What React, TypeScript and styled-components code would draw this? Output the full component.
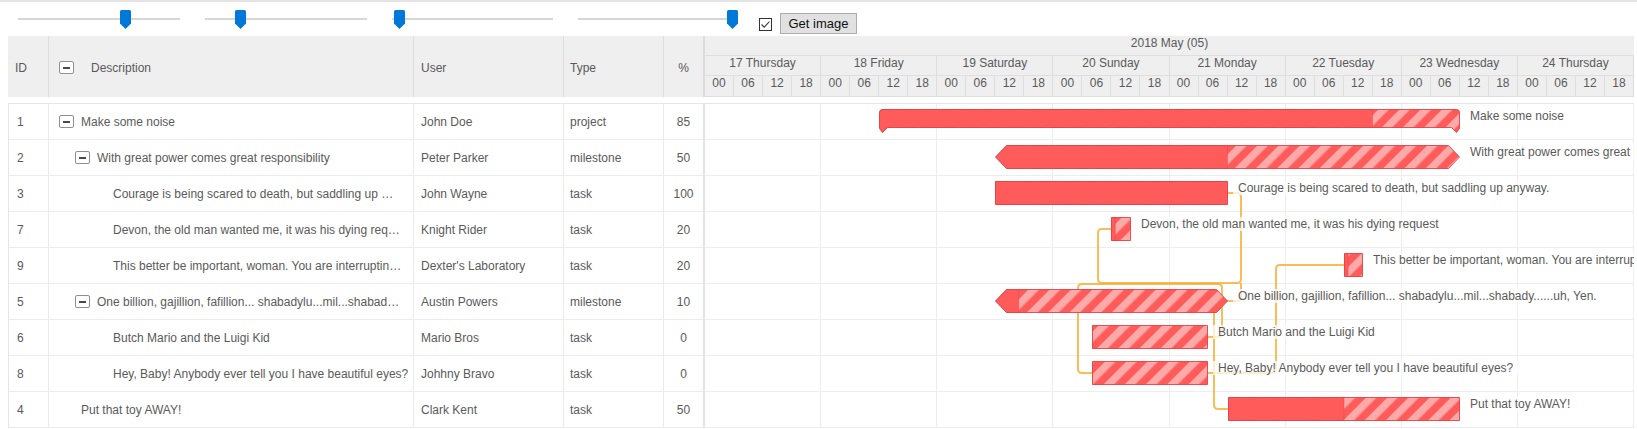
import React from "react";
import styled, { createGlobalStyle } from "styled-components";

const GlobalStyle = createGlobalStyle`
  html, body { margin: 0; padding: 0; background: #fff; }
  body { font-family: "Liberation Sans", Arial, sans-serif; font-size: 12px; color: #5a5a5a; }
  * { box-sizing: border-box; }
`;

const GANTT_W = 929;
const HOUR = GANTT_W / 192;
const X = (h: number) => h * HOUR;
const ROW = 36;

type Kind = "project" | "summary" | "task";
interface Task {
  id: number;
  desc: string;
  label: string;
  user: string;
  type: string;
  pct: number;
  level: number;
  toggle: boolean;
  kind: Kind;
  start: number;
  end: number;
}

const tasks: Task[] = [
  { id: 1, desc: "Make some noise", label: "Make some noise", user: "John Doe", type: "project", pct: 85, level: 0, toggle: true, kind: "project", start: 36, end: 156 },
  { id: 2, desc: "With great power comes great responsibility", label: "With great power comes great responsibility", user: "Peter Parker", type: "milestone", pct: 50, level: 1, toggle: true, kind: "summary", start: 60, end: 156 },
  { id: 3, desc: "Courage is being scared to death, but saddling up …", label: "Courage is being scared to death, but saddling up anyway.", user: "John Wayne", type: "task", pct: 100, level: 2, toggle: false, kind: "task", start: 60, end: 108 },
  { id: 7, desc: "Devon, the old man wanted me, it was his dying req…", label: "Devon, the old man wanted me, it was his dying request", user: "Knight Rider", type: "task", pct: 20, level: 2, toggle: false, kind: "task", start: 84, end: 88 },
  { id: 9, desc: "This better be important, woman. You are interruptin…", label: "This better be important, woman. You are interrupting my experiment.", user: "Dexter's Laboratory", type: "task", pct: 20, level: 2, toggle: false, kind: "task", start: 132, end: 136 },
  { id: 5, desc: "One billion, gajillion, fafillion... shabadylu...mil...shabad…", label: "One billion, gajillion, fafillion... shabadylu...mil...shabady......uh, Yen.", user: "Austin Powers", type: "milestone", pct: 10, level: 1, toggle: true, kind: "summary", start: 60, end: 108 },
  { id: 6, desc: "Butch Mario and the Luigi Kid", label: "Butch Mario and the Luigi Kid", user: "Mario Bros", type: "task", pct: 0, level: 2, toggle: false, kind: "task", start: 80, end: 104 },
  { id: 8, desc: "Hey, Baby! Anybody ever tell you I have beautiful eyes?", label: "Hey, Baby! Anybody ever tell you I have beautiful eyes?", user: "Johhny Bravo", type: "task", pct: 0, level: 2, toggle: false, kind: "task", start: 80, end: 104 },
  { id: 4, desc: "Put that toy AWAY!", label: "Put that toy AWAY!", user: "Clark Kent", type: "task", pct: 50, level: 0, toggle: false, kind: "task", start: 108, end: 156 },
];

const days = ["17 Thursday", "18 Friday", "19 Saturday", "20 Sunday", "21 Monday", "22 Tuesday", "23 Wednesday", "24 Thursday"];
const hours = ["00", "06", "12", "18"];

const links: [number, number][][] = [
  [[522, 89], [536, 89], [536, 179], [393, 179], [393, 125], [407, 125]],
  [[522, 197], [536, 197], [536, 179]],
  [[503, 233], [517, 233], [517, 180], [373, 180], [373, 269], [388, 269]],
  [[509, 197], [509, 305], [523, 305]],
  [[503, 269], [571, 269], [571, 161], [640, 161]],
];

function roundedPath(pts: [number, number][], r = 4) {
  let d = `M${pts[0][0]},${pts[0][1]}`;
  for (let i = 1; i < pts.length - 1; i++) {
    const [px, py] = pts[i - 1];
    const [cx, cy] = pts[i];
    const [nx, ny] = pts[i + 1];
    const d1 = Math.hypot(cx - px, cy - py);
    const d2 = Math.hypot(nx - cx, ny - cy);
    const rr = Math.min(r, d1 / 2, d2 / 2);
    const ax = cx + ((px - cx) / d1) * rr;
    const ay = cy + ((py - cy) / d1) * rr;
    const bx = cx + ((nx - cx) / d2) * rr;
    const by = cy + ((ny - cy) / d2) * rr;
    d += ` L${ax},${ay} Q${cx},${cy} ${bx},${by}`;
  }
  const last = pts[pts.length - 1];
  d += ` L${last[0]},${last[1]}`;
  return d;
}

function barShape(t: Task, top: number) {
  const x0 = Math.round(X(t.start)) + 0.5;
  const x1 = Math.round(X(t.end)) - 0.5;
  if (t.kind === "project") {
    const y0 = top + 5.5;
    const y1 = top + 23.5;
    return {
      x0, x1,
      d: `M${x0},${y0 + 3} Q${x0},${y0} ${x0 + 3},${y0} L${x1 - 3},${y0} Q${x1},${y0} ${x1},${y0 + 3} L${x1},${y1 + 1} L${x1 - 3},${y1 + 5} L${x1 - 8},${y1} L${x0 + 8},${y1} L${x0 + 3},${y1 + 5} L${x0},${y1 + 1} Z`,
    };
  }
  const y0 = top + 5.5;
  const y1 = top + 28.5;
  if (t.kind === "summary") {
    const mid = top + 17;
    return {
      x0, x1,
      d: `M${x0},${mid} L${x0 + 11},${y0} L${x1 - 11},${y0} L${x1},${mid} L${x1 - 11},${y1} L${x0 + 11},${y1} Z`,
    };
  }
  return { x0, x1, d: `M${x0},${y0} L${x1},${y0} L${x1},${y1} L${x0},${y1} Z` };
}

/* ---------- toolbar ---------- */

const Page = styled.div`
  width: 1637px;
  height: 429px;
  overflow: hidden;
  border-top: 2px solid #e4e4e4;
`;

const Toolbar = styled.div`
  display: flex;
  align-items: flex-start;
  height: 34px;
  padding-left: 18px;
`;

const SliderBox = styled.div<{ $width: number }>`
  position: relative;
  width: ${(p) => p.$width}px;
  height: 19px;
  margin-top: 8px;
  flex: none;
  & + & { margin-left: 25px; }
`;

const Track = styled.div`
  margin-top: 8px;
  height: 2px;
  background: #d6d6d6;
`;

const Thumb = styled.div`
  position: absolute;
  top: 0;
  width: 11px;
  height: 19px;
  display: flex;
`;

const CheckBox = styled.div`
  margin-left: 21px;
  margin-top: 16px;
  width: 13px;
  height: 13px;
  flex: none;
  border: 1px solid #333;
  background: #fff;
  display: flex;
  align-items: center;
  justify-content: center;
`;

const Button = styled.button`
  margin-left: 8px;
  margin-top: 11px;
  width: 77px;
  height: 21px;
  flex: none;
  padding: 0;
  background: #e1e1e1;
  border: 1px solid #adadad;
  font-family: "Liberation Sans", Arial, sans-serif;
  font-size: 13px;
  color: #111;
`;

const Slider = ({ width, value }: { width: number; value: number }) => (
  <SliderBox $width={width}>
    <Track />
    <Thumb style={{ left: value * (width - 11) }}>
      <svg width="11" height="19" viewBox="0 0 11 19">
        <path d="M1.5 0 H9.5 Q11 0 11 1.5 V13.5 L5.5 19 L0 13.5 V1.5 Q0 0 1.5 0 Z" fill="#0078d7" />
      </svg>
    </Thumb>
  </SliderBox>
);

/* ---------- chart ---------- */

const Chart = styled.div`
  padding-left: 8px;
`;

const HeaderRow = styled.div`
  display: flex;
  height: 61px;
`;

const BodyRowWrap = styled.div`
  display: flex;
  margin-top: 6px;
`;

const LeftHeader = styled.div`
  display: flex;
  width: 695px;
  background: #efefef;
`;

const HeadCell = styled.div<{ $w: number; $center?: boolean; $pad?: number }>`
  width: ${(p) => p.$w}px;
  flex: none;
  display: flex;
  align-items: center;
  justify-content: ${(p) => (p.$center ? "center" : "flex-start")};
  padding-left: ${(p) => (p.$center ? 0 : p.$pad ?? 7)}px;
  padding-top: 2px;
  border-right: 1px solid #dedede;
  white-space: nowrap;
  &:last-child { border-right: none; }
`;

const Splitter = styled.div<{ $tone: string }>`
  width: 2px;
  flex: none;
  background: ${(p) => p.$tone};
`;

const GanttHeader = styled.div`
  width: ${GANTT_W}px;
  flex: none;
  background: #efefef;
  display: flex;
  flex-direction: column;
`;

const MonthRow = styled.div`
  height: 20px;
  line-height: 14px;
  text-align: center;
  border-bottom: 1px solid #dedede;
`;

const ScaleRow = styled.div<{ $last?: boolean }>`
  display: flex;
  height: ${(p) => (p.$last ? 21 : 20)}px;
  border-bottom: 1px solid #dedede;
`;

const ScaleCell = styled.div`
  flex: 1 1 0;
  min-width: 0;
  line-height: 14px;
  text-align: center;
  border-right: 1px solid #dedede;
  white-space: nowrap;
  overflow: hidden;
`;

const Toggle = styled.span`
  width: 15px;
  height: 13px;
  flex: none;
  border: 1px solid #909090;
  border-radius: 2px;
  background: #fff;
  display: inline-flex;
  align-items: center;
  justify-content: center;
  &::before {
    content: "";
    width: 7px;
    height: 2px;
    background: #4a4a4a;
  }
`;

const HeadToggle = styled(Toggle)`
  margin-right: 17px;
`;

const RowToggle = styled(Toggle)`
  margin-right: 7px;
`;

const LeafSpacer = styled.span`
  width: 22px;
  flex: none;
`;

const LeftBody = styled.div`
  width: 695px;
  flex: none;
  border-top: 1px solid #e6e6e6;
  border-left: 1px solid #e6e6e6;
`;

const Row = styled.div`
  display: flex;
  height: ${ROW}px;
  border-bottom: 1px solid #ebebeb;
`;

const Cell = styled.div<{ $w: number; $center?: boolean; $pad?: number }>`
  width: ${(p) => p.$w}px;
  flex: none;
  display: flex;
  align-items: center;
  justify-content: ${(p) => (p.$center ? "center" : "flex-start")};
  padding-left: ${(p) => (p.$center ? 0 : p.$pad ?? 7)}px;
  border-right: 1px solid #ebebeb;
  white-space: nowrap;
  overflow: hidden;
  &:last-child { border-right: none; }
`;

const DescText = styled.span`
  overflow: hidden;
  white-space: nowrap;
`;

const GanttBody = styled.div`
  position: relative;
  width: ${GANTT_W}px;
  flex: none;
  border-top: 1px solid #e6e6e6;
  overflow: hidden;
`;

const GridRow = styled.div`
  display: flex;
  height: ${ROW}px;
  border-bottom: 1px solid #ededed;
`;

const GridDay = styled.div`
  flex: 1 1 0;
  border-right: 1px solid #ededed;
`;

const Overlay = styled.svg`
  position: absolute;
  left: 0;
  top: 0;
  pointer-events: none;
`;

const BarLabel = styled.div`
  position: absolute;
  padding: 0 5px;
  line-height: 14px;
  white-space: nowrap;
  color: #5a5a5a;
  background: rgba(255, 255, 255, 0.72);
`;

const COLS = { id: 41, desc: 365, user: 150, type: 100, pct: 39 };

export default function App() {
  const H = tasks.length * ROW;
  return (
    <Page>
      <GlobalStyle />
      <Toolbar>
        <Slider width={162} value={0.675} />
        <Slider width={162} value={0.2} />
        <Slider width={161} value={0.013} />
        <Slider width={160} value={1} />
        <CheckBox>
          <svg width="11" height="11" viewBox="0 0 11 11">
            <path d="M1.5 5.5 L4.2 8.2 L9.5 2.5" fill="none" stroke="#333" strokeWidth="1.1" />
          </svg>
        </CheckBox>
        <Button>Get image</Button>
      </Toolbar>
      <Chart>
        <HeaderRow>
          <LeftHeader>
            <HeadCell $w={COLS.id} $pad={7}>ID</HeadCell>
            <HeadCell $w={COLS.desc} $pad={10}>
              <HeadToggle />
              Description
            </HeadCell>
            <HeadCell $w={COLS.user}>User</HeadCell>
            <HeadCell $w={COLS.type} $pad={6}>Type</HeadCell>
            <HeadCell $w={COLS.pct} $center>%</HeadCell>
          </LeftHeader>
          <Splitter $tone="#dcdcdc" />
          <GanttHeader>
            <MonthRow>2018 May (05)</MonthRow>
            <ScaleRow>
              {days.map((d) => (
                <ScaleCell key={d}>{d}</ScaleCell>
              ))}
            </ScaleRow>
            <ScaleRow $last>
              {days.flatMap((d) => hours.map((h) => <ScaleCell key={d + h}>{h}</ScaleCell>))}
            </ScaleRow>
          </GanttHeader>
        </HeaderRow>
        <BodyRowWrap>
          <LeftBody>
            {tasks.map((t) => (
              <Row key={t.id}>
                <Cell $w={COLS.id - 1} $pad={8}>{t.id}</Cell>
                <Cell $w={COLS.desc} $pad={10 + t.level * 16}>
                  {t.toggle ? <RowToggle /> : <LeafSpacer />}
                  <DescText>{t.desc}</DescText>
                </Cell>
                <Cell $w={COLS.user}>{t.user}</Cell>
                <Cell $w={COLS.type} $pad={6}>{t.type}</Cell>
                <Cell $w={COLS.pct} $center>{t.pct}</Cell>
              </Row>
            ))}
          </LeftBody>
          <Splitter $tone="#e3e3e3" />
          <GanttBody>
            {tasks.map((t) => (
              <GridRow key={t.id}>
                {days.map((d) => (
                  <GridDay key={d} />
                ))}
              </GridRow>
            ))}
            <Overlay width={GANTT_W} height={H} viewBox={`0 0 ${GANTT_W} ${H}`}>
              <defs>
                <pattern id="stripes" patternUnits="userSpaceOnUse" width="15" height="15" patternTransform="rotate(45)">
                  <rect width="15" height="15" fill="#ff5b5b" />
                  <rect width="7.5" height="15" fill="#ffa9a9" />
                </pattern>
                {tasks.map((t, i) => (
                  <clipPath id={`clip-${i}`} key={t.id}>
                    <path d={barShape(t, i * ROW).d} />
                  </clipPath>
                ))}
              </defs>
              <g fill="none" stroke="#f6ad2f" strokeOpacity="0.8" strokeWidth="2">
                {links.map((l, i) => (
                  <path key={i} d={roundedPath(l)} />
                ))}
              </g>
              {tasks.map((t, i) => {
                const top = i * ROW;
                const s = barShape(t, top);
                const px = s.x0 + ((s.x1 - s.x0) * t.pct) / 100;
                return (
                  <g key={t.id}>
                    <g clipPath={`url(#clip-${i})`}>
                      <rect x={s.x0 - 1} y={top} width={s.x1 - s.x0 + 2} height={ROW} fill="url(#stripes)" />
                      <rect x={s.x0 - 1} y={top} width={px - s.x0 + 1} height={ROW} fill="#ff5b5b" />
                      {t.pct > 0 && t.pct < 100 && (
                        <line x1={px} x2={px} y1={top} y2={top + ROW} stroke="#e0383d" strokeOpacity="0.35" />
                      )}
                    </g>
                    <path d={s.d} fill="none" stroke="#e2373c" strokeOpacity="0.85" />
                  </g>
                );
              })}
            </Overlay>
            {tasks.map((t, i) => (
              <BarLabel key={t.id} style={{ left: Math.round(X(t.end)) + 5, top: i * ROW + 5 }}>
                {t.label}
              </BarLabel>
            ))}
          </GanttBody>
        </BodyRowWrap>
      </Chart>
    </Page>
  );
}
